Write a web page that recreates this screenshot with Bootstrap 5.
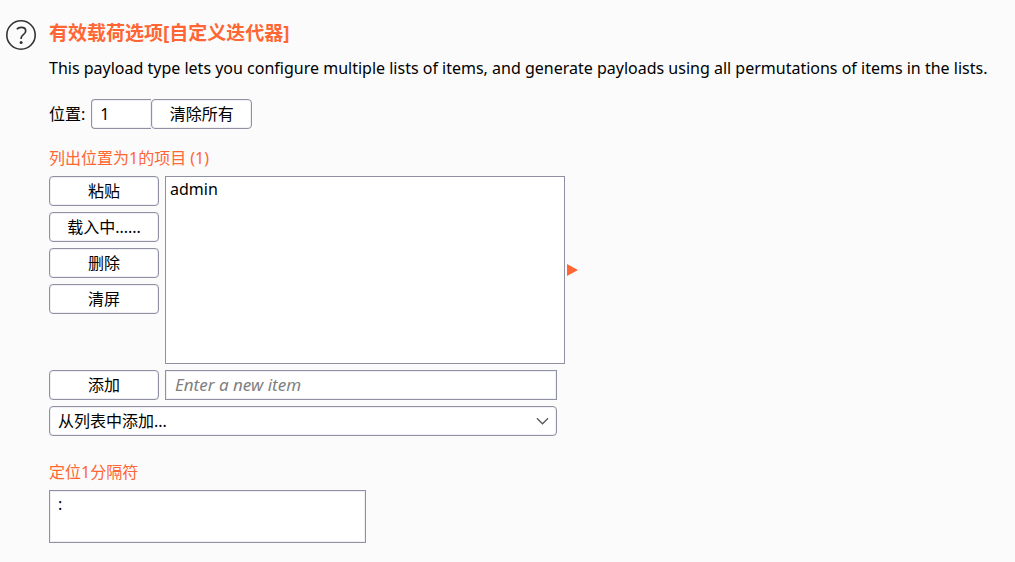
<!DOCTYPE html>
<html lang="zh-CN">
<head>
<meta charset="utf-8">
<meta name="viewport" content="width=device-width, initial-scale=1">
<title>有效载荷选项</title>
<link href="https://cdn.jsdelivr.net/npm/bootstrap@5.3.0/dist/css/bootstrap.min.css" rel="stylesheet">
<style>
  :root { --accent: #ff6633; --line: #9090a3; }
  body { background: #fbfbfb; color: #000; font: 16px/24px "Noto Sans", "Noto Sans CJK SC", sans-serif; }
  .options { padding: 20px 12px 18px 5px; }
  .help-btn { width: 32px; height: 32px; margin-right: 12px; }
  .accent { color: var(--accent); }
  .panel-title { font-size: 19px; line-height: 26px; font-weight: 700; margin-bottom: 10px; }
  .section-title { font-size: 16px; line-height: 24px; font-weight: 400; margin-bottom: 6px; }
  .position-row { margin: 19px 0 17px; }
  .btn-tool, .field, .picker {
    height: 30px; padding: 0 8px; border: 1px solid var(--line); background-color: #fff;
    color: #000; font-size: 16px; line-height: 24px; box-shadow: inset 0 0 0 1px #f0f0f4;
  }
  .btn-tool, .picker { border-radius: 4px; }
  .btn-tool:hover { background-color: #f4f4f7; border-color: var(--line); }
  .field { border-radius: 0; }
  .new-item { padding-left: 9px; }
  .new-item::placeholder { color: #808080; font-style: italic; font-size: 17px; }
  .position-input { width: 60px; margin-left: 6px; border-radius: 4px 0 0 4px; border-right: 0; }
  .clear-btn { width: 101px; }
  .editor { width: 508px; max-width: 100%; margin-top: 6px; }
  .tool-col { width: 110px; flex: none; }
  .gap-tool { gap: 6px; }
  .item-list { width: 400px; height: 188px; padding: 0 4px; border: 1px solid var(--line); background: #fff; overflow: hidden; }
  .expand-btn { width: 12px; height: 14px; margin-left: 2px; }
  .picker {
    background-image: url("data:image/svg+xml,%3Csvg xmlns='http://www.w3.org/2000/svg' viewBox='0 0 14 8'%3E%3Cpath d='M1 1l6 6 6-6' fill='none' stroke='%23555' stroke-width='1.3'/%3E%3C/svg%3E");
    background-position: right 7px center; background-size: 13px 8px;
  }
  .separator { width: 317px; max-width: 100%; height: 53px; padding: 1px 8px; resize: none; }
</style>
</head>
<body>
<main class="options d-flex align-items-start">
  <button type="button" class="help-btn btn p-0 border-0 flex-shrink-0 d-flex" aria-label="帮助">
    <svg width="32" height="32" viewBox="0 0 32 32" fill="none" aria-hidden="true">
      <circle cx="16" cy="15" r="14.2" stroke="#333" stroke-width="1.6"/>
      <path d="M11.800 9.200C12.900 7.900 14.200 7.300 16.300 7.300C19 7.300 20.700 8.700 20.700 10.900C20.700 12.800 19.600 13.800 18.100 14.900C16.700 16 16.100 16.700 16.100 18.400V19" stroke="#333" stroke-width="1.700"/>
      <circle cx="16.100" cy="22.500" r="1.500" fill="#333"/>
    </svg>
  </button>
  <div class="flex-grow-1">
    <h1 class="panel-title accent">有效载荷选项[自定义迭代器]</h1>
    <p class="mb-0">This payload type lets you configure multiple lists of items, and generate payloads using all permutations of items in the lists.</p>

    <div class="position-row d-flex align-items-center">
      <label for="position">位置:</label>
      <input id="position" class="field position-input" type="text" value="1">
      <button type="button" class="btn btn-tool clear-btn">清除所有</button>
    </div>

    <h2 class="section-title accent" id="items-title">列出位置为1的项目 (1)</h2>
    <div class="d-flex gap-tool">
      <div class="tool-col d-flex flex-column gap-tool">
        <button type="button" class="btn btn-tool">粘贴</button>
        <button type="button" class="btn btn-tool">载入中......</button>
        <button type="button" class="btn btn-tool">删除</button>
        <button type="button" class="btn btn-tool">清屏</button>
      </div>
      <div class="d-flex align-items-center">
        <ul class="item-list list-unstyled mb-0" aria-labelledby="items-title"><li>admin</li></ul>
        <button type="button" class="expand-btn btn p-0 border-0 d-flex" aria-label="展开">
          <svg width="12" height="14" viewBox="0 0 12 14" aria-hidden="true"><path d="M0 1l11 6-11 6z" fill="#ff6633"/></svg>
        </button>
      </div>
    </div>
    <div class="editor d-flex flex-column gap-tool">
      <div class="d-flex gap-tool">
        <button type="button" class="btn btn-tool tool-col">添加</button>
        <input class="field new-item flex-grow-1" type="text" placeholder="Enter a new item" aria-label="新项目">
      </div>
      <select class="form-select picker" aria-label="从列表中添加"><option>从列表中添加...</option></select>
    </div>

    <h2 class="section-title mt-4"><label class="accent" for="separator">定位1分隔符</label></h2>
    <textarea id="separator" class="field separator d-block">:</textarea>
  </div>
</main>
<script src="https://cdn.jsdelivr.net/npm/bootstrap@5.3.0/dist/js/bootstrap.bundle.min.js"></script>
</body>
</html>
